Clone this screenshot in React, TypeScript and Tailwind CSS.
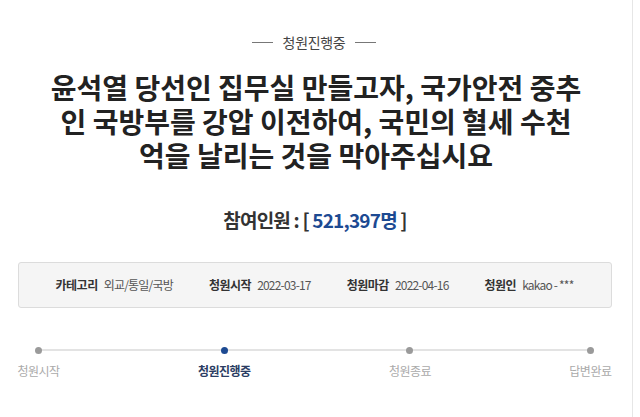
import React from "react";

const font = { fontFamily: '"Noto Sans CJK KR", "Noto Sans", sans-serif' };

function InfoItem({ label, value }: { label: string; value: string }) {
  return (
    <div className="flex items-center gap-[6px] text-[12px] leading-none">
      <span className="font-bold text-[#333] tracking-[-0.5px]">{label}</span>
      <span className="text-[#555] tracking-[-0.8px]">{value}</span>
    </div>
  );
}

function Step({ label, active }: { label: string; active?: boolean }) {
  return (
    <div className="flex flex-col items-center">
      <div
        className={
          active
            ? "w-[7px] h-[7px] rounded-full bg-[#1d4a92] z-10"
            : "w-[7px] h-[7px] rounded-full bg-[#9a9a9a] z-10"
        }
      />
      <span
        className={
          active
            ? "mt-[11px] text-[12px] leading-none font-bold text-[#2b3d63] tracking-[-0.5px]"
            : "mt-[11px] text-[12px] leading-none text-[#aaa] tracking-[-0.5px]"
        }
      >
        {label}
      </span>
    </div>
  );
}

export default function App() {
  return (
    <div className="w-[640px] h-[417px] bg-white overflow-hidden flex" style={font}>
      <div className="w-[633px] h-full border-r border-[#e6e6e6] flex flex-col items-center">
        <div className="mt-[35px] flex items-center gap-[10px] text-[14px] leading-none text-[#444] ml-[-4px]">
          <span className="w-[21px] h-px bg-[#777]" />
          <span className="tracking-[-0.3px]">청원진행중</span>
          <span className="w-[21px] h-px bg-[#777]" />
        </div>

        <h1 className="mt-[21px] w-[600px] text-center text-[28px] leading-[34px] font-bold text-[#222] tracking-[0px]">
          윤석열 당선인 집무실 만들고자, 국가안전 중추
          <br />
          인 국방부를 강압 이전하여, 국민의 혈세 수천
          <br />
          억을 날리는 것을 막아주십시요
        </h1>

        <div className="mt-[38px] text-[19px] leading-none font-bold text-[#333] tracking-[-0.8px] ml-[-2px]">
          참여인원 : [ <span className="text-[#1d4a92]">521,397명</span> ]
        </div>

        <div className="mt-[33px] w-[594px] h-[46px] ml-[-3px] bg-[#f5f5f5] border border-[#dcdcdc] rounded-[3px] flex items-center justify-center gap-[36px]">
          <InfoItem label="카테고리" value="외교/통일/국방" />
          <InfoItem label="청원시작" value="2022-03-17" />
          <InfoItem label="청원마감" value="2022-04-16" />
          <InfoItem label="청원인" value="kakao - ***" />
        </div>

        <div className="mt-[39px] w-[594px] ml-[-3px] relative">
          <div className="absolute left-[19px] right-[20px] top-[2px] h-[2px] bg-[#e3e3e3]" />
          <div className="flex justify-between">
            <Step label="청원시작" />
            <Step label="청원진행중" active />
            <Step label="청원종료" />
            <Step label="답변완료" />
          </div>
        </div>
      </div>
    </div>
  );
}
